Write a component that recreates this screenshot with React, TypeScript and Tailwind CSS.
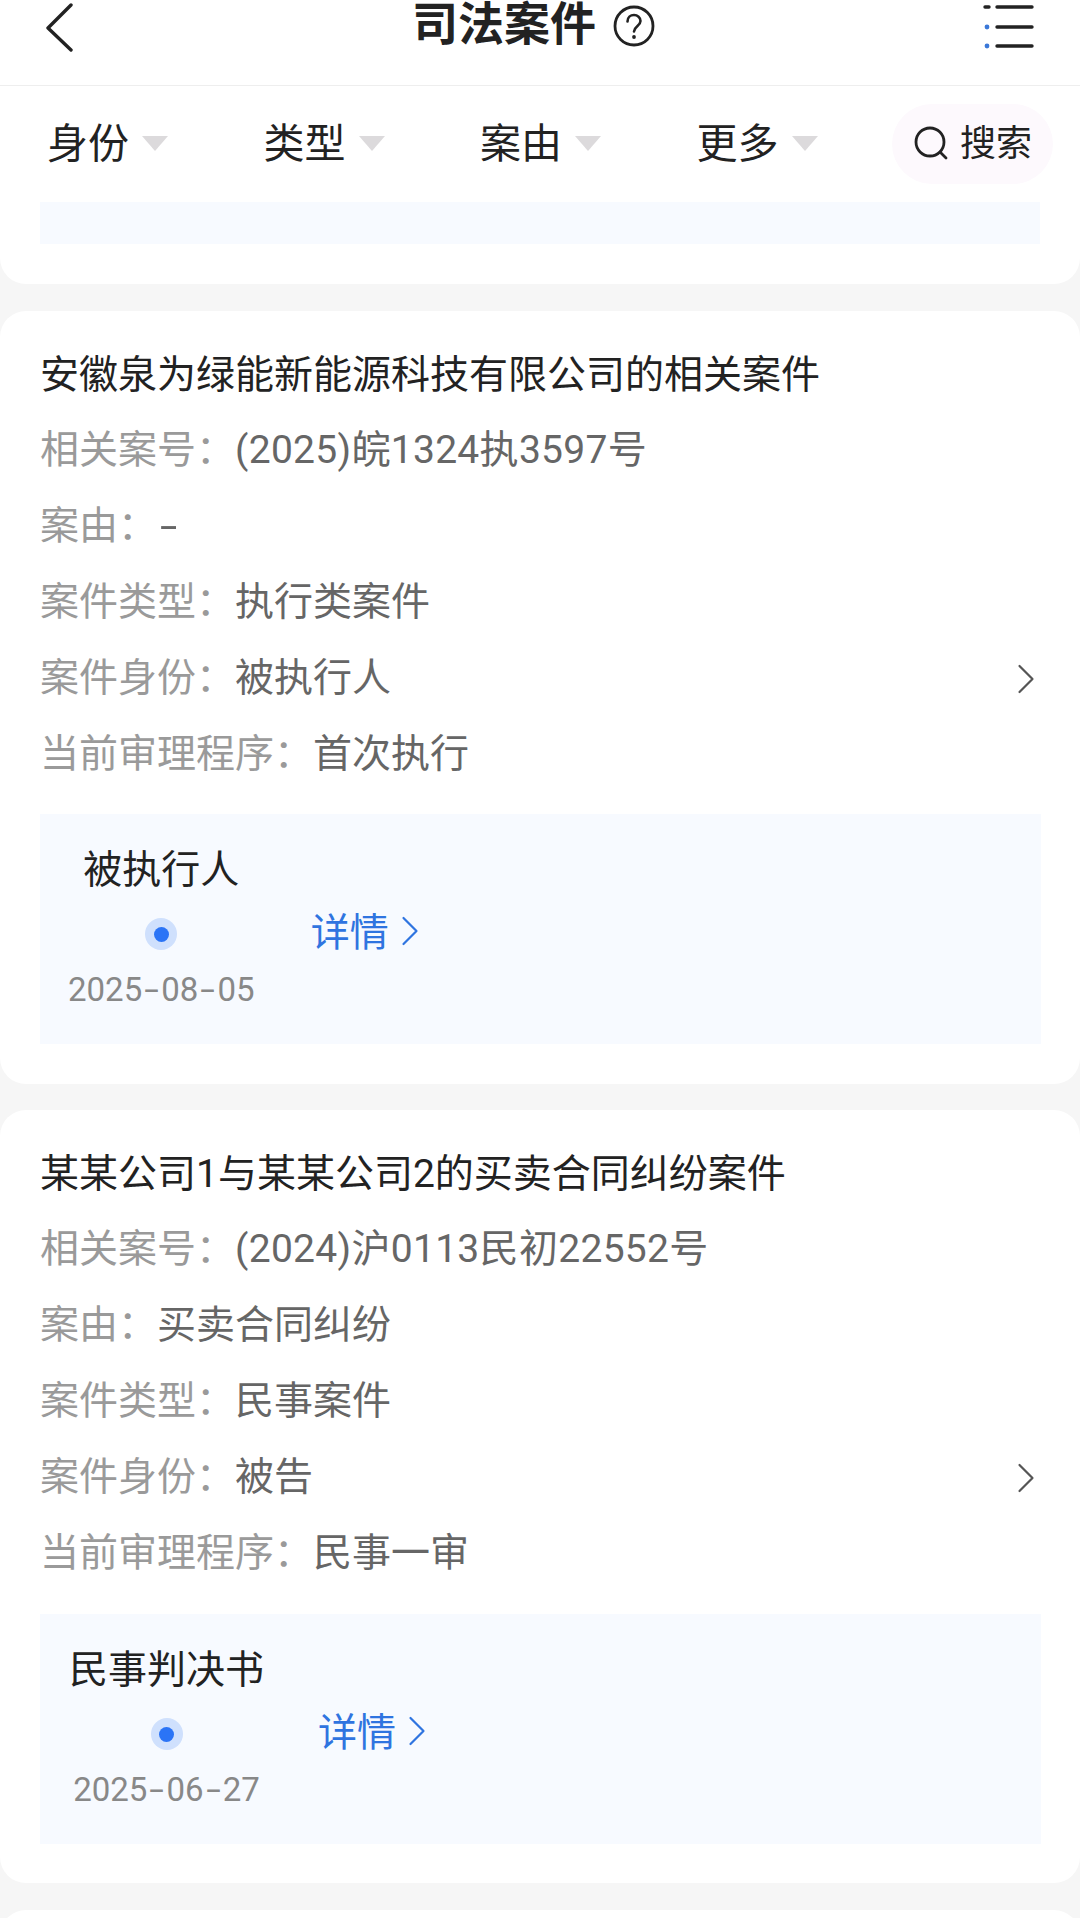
type CaseRow = { label: string; value: string; arrow?: boolean }

type CaseItem = {
  title: string
  rows: CaseRow[]
  step: string
  date: string
  stepPad: string
  linkGap: string
  boxTop: string
  cardBottom: string
}

const cases: CaseItem[] = [
  {
    title: "安徽泉为绿能新能源科技有限公司的相关案件",
    rows: [
      { label: "相关案号：", value: "(2025)皖1324执3597号" },
      { label: "案由：", value: "-" },
      { label: "案件类型：", value: "执行类案件" },
      { label: "案件身份：", value: "被执行人", arrow: true },
      { label: "当前审理程序：", value: "首次执行" },
    ],
    step: "被执行人",
    date: "2025-08-05",
    stepPad: "pl-[28px]",
    linkGap: "ml-[56px]",
    boxTop: "mt-[23px]",
    cardBottom: "pb-[40px]",
  },
  {
    title: "某某公司1与某某公司2的买卖合同纠纷案件",
    rows: [
      { label: "相关案号：", value: "(2024)沪0113民初22552号" },
      { label: "案由：", value: "买卖合同纠纷" },
      { label: "案件类型：", value: "民事案件" },
      { label: "案件身份：", value: "被告", arrow: true },
      { label: "当前审理程序：", value: "民事一审" },
    ],
    step: "民事判决书",
    date: "2025-06-27",
    stepPad: "pl-[29px]",
    linkGap: "ml-[54px]",
    boxTop: "mt-[24px]",
    cardBottom: "pb-[39px]",
  },
]

const filters = ["身份", "类型", "案由", "更多"]

const Chevron = ({ className }: { className: string }) => (
  <svg className={className} viewBox="0 0 18 30" fill="none">
    <path d="M2.500 2 L15.500 15 L2.500 28" stroke="currentColor" strokeWidth="2.200" strokeLinecap="round" strokeLinejoin="round" />
  </svg>
)

const Header = () => (
  <div className="flex h-[86px] items-start border-b border-[#eeeeee] bg-white">
    <svg className="ml-[44px] mt-[2px] h-[50px] w-[32px]" viewBox="0 0 32 50" fill="none">
      <path d="M27 3 L4 26 L27 48" stroke="#222" strokeWidth="3.400" strokeLinecap="round" strokeLinejoin="round" />
    </svg>
    <h1 className="ml-[336px] text-[46px] font-bold leading-[49px] text-[#222]">司法案件</h1>
    <svg className="ml-[17px] mt-[5px] h-[42px] w-[42px]" viewBox="0 0 42 42" fill="none">
      <circle cx="21" cy="21" r="19" stroke="#222" strokeWidth="2.800" />
      <path d="M14.500 16.500c0-4 3-6.500 6.500-6.500s6.500 2.500 6.500 6c0 5-6.500 5.500-6.500 10.500" stroke="#222" strokeWidth="2.600" strokeLinecap="round" />
      <circle cx="21" cy="32" r="1.900" fill="#222" />
    </svg>
    <svg className="ml-[327px] mt-[3px] h-[50px] w-[54px]" viewBox="0 0 54 50" fill="none">
      <path d="M3 4h4" stroke="#222" strokeWidth="3.400" strokeLinecap="round" />
      <circle cx="5" cy="24" r="2.400" fill="#3b78d8" />
      <circle cx="5" cy="43" r="2.400" fill="#3b78d8" />
      <path d="M15 4h35M15 24h35M15 43h35" stroke="#222" strokeWidth="3.400" strokeLinecap="round" />
    </svg>
  </div>
)

const FilterBar = () => (
  <div className="flex h-[116px] items-center bg-white pl-[47px]">
    {filters.map((f) => (
      <div key={f} className="flex w-[216.5px] items-center">
        <span className="h-[56px] text-[41px] leading-[56px] text-[#222]">{f}</span>
        <div className="ml-[13px] -mt-[1px] h-0 w-0 border-x-[13px] border-t-[15px] border-x-transparent border-t-[#dcdadc]" />
      </div>
    ))}
    <div className="-ml-[21px] flex h-[80px] w-[161px] items-center rounded-[40px] bg-[#fdf9fd] pl-[22px]">
      <svg className="-mt-[2px] h-[34px] w-[34px]" viewBox="0 0 34 34" fill="none">
        <circle cx="16" cy="16" r="14" stroke="#222" strokeWidth="2.800" />
        <path d="M26 26l6 6" stroke="#222" strokeWidth="2.800" strokeLinecap="round" />
      </svg>
      <span className="ml-[12px] h-[50px] text-[36px] leading-[50px] text-[#222]">搜索</span>
    </div>
  </div>
)

const Dash = () => <span className="mx-[5px] inline-block scale-x-[1.6]">-</span>

const CaseDate = ({ date }: { date: string }) => {
  const parts = date.split("-")
  return (
    <span className="mt-[15px] text-[33px] leading-[50px] text-[#888888]">
      {parts[0]}
      <Dash />
      {parts[1]}
      <Dash />
      {parts[2]}
    </span>
  )
}

const RowValue = ({ value }: { value: string }) => {
  if (value === "-") {
    return <span className="ml-[3px] inline-block origin-left scale-x-[1.6] text-[#666666]">-</span>
  }
  // case numbers run slightly wider than Roboto's digits
  return <span className={value.startsWith("(") ? "tracking-[0.3px] text-[#666666]" : "text-[#666666]"}>{value}</span>
}

const CaseCard = ({ item }: { item: CaseItem }) => (
  <div className={`${item.cardBottom} mt-[26px] rounded-[26px] bg-white pl-[40px] pr-[39px] pt-[26px]`}>
    <h3 className="h-[74px] text-[39px] leading-[76px] text-[#222]">{item.title}</h3>
    {item.rows.map((row) => (
      <div key={row.label} className="flex h-[76px] items-center pt-[3px] text-[39px]">
        <span className="text-[#9a9a9a]">{row.label}</span>
        <RowValue value={row.value} />
        {row.arrow && <Chevron className="ml-auto mr-[6px] h-[30px] w-[18px] text-[#555]" />}
      </div>
    ))}
    <div className={`${item.boxTop} flex h-[230px] bg-[#f7faff] pt-[24px]`}>
      <div className={`${item.stepPad} flex flex-col items-center`}>
        <span className="h-[62px] text-[39px] leading-[65px] text-[#222]">{item.step}</span>
        <div className="mt-[18px] flex h-[32px] w-[32px] items-center justify-center rounded-full bg-[#cfe0fd]">
          <div className="h-[15px] w-[15px] rounded-full bg-[#2b74f6]" />
        </div>
        <CaseDate date={item.date} />
      </div>
      <div className={`${item.linkGap} mt-[62px] flex h-[56px] items-center text-[#2f74e0]`}>
        <span className="h-[56px] text-[39px] leading-[66px]">详情</span>
        <Chevron className="ml-[12px] mt-[6px] h-[30px] w-[18px]" />
      </div>
    </div>
  </div>
)

export default function App() {
  return (
    <div
      className="h-[1918px] w-[1080px] overflow-hidden bg-[#f6f6f6]"
      style={{ fontFamily: 'Roboto, "Noto Sans CJK SC", sans-serif' }}
    >
      <Header />
      <FilterBar />
      <div className="rounded-b-[26px] bg-white px-[40px] pb-[40px]">
        <div className="h-[42px] bg-[#f7faff]" />
      </div>
      <div className="pt-px">
        {cases.map((c) => (
          <CaseCard key={c.title} item={c} />
        ))}
      </div>
      <div className="mt-[27px] h-[100px] rounded-t-[26px] bg-white" />
    </div>
  )
}
